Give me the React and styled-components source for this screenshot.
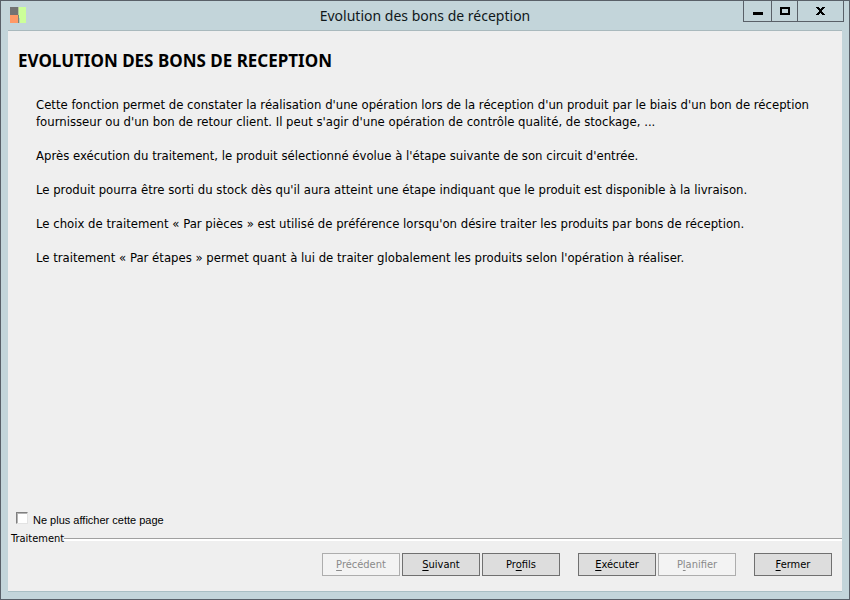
import React, { useState } from 'react';
import styled, { createGlobalStyle } from 'styled-components';

const GlobalStyle = createGlobalStyle`
  * {
    box-sizing: border-box;
  }

  body {
    margin: 0;
    background: #c3d5da;
    color: #000;
    font-family: 'DejaVu Sans Condensed', 'Noto Sans', sans-serif;
    font-size: 13px;
  }
`;

const Window = styled.div`
  display: flex;
  flex-direction: column;
  min-height: 100vh;
  padding: 0 7px 7px;
  border: 1px solid #596068;
  background: #c3d5da;
`;

const TitleBar = styled.header`
  display: grid;
  grid-template-columns: 102px 1fr 102px;
  height: 29px;
`;

const AppIcon = styled.svg`
  display: block;
  margin: 6px 2px;
`;

const WindowTitle = styled.div`
  text-align: center;
  color: #10181a;
  font-family: 'Noto Sans', 'Open Sans', sans-serif;
  font-size: 14px;
  line-height: 29px;
`;

const WindowControls = styled.div`
  display: flex;
  justify-content: flex-end;
  height: 21px;
  margin-right: -2px;
`;

const ControlButton = styled.button`
  display: flex;
  align-items: center;
  justify-content: center;
  flex: none;
  width: ${({ $width }) => $width}px;
  margin: 0 0 0 -1px;
  padding: 0;
  border: 1px solid #596068;
  border-top: 0;
  background: transparent;
`;

const Client = styled.main`
  display: flex;
  flex: 1;
  flex-direction: column;
  border-top: 1px solid #a9b9bd;
  border-bottom: 1px solid #a9bfc4;
  background: #efefef;
`;

const Heading = styled.h1`
  margin: 0;
  padding: 18px 10px 0;
  font-family: 'Noto Sans', 'Open Sans', sans-serif;
  font-size: 17px;
  font-weight: 700;
  line-height: 24px;
`;

const Description = styled.div`
  flex: 1;
  padding: 23px 28px 0;
`;

const Paragraph = styled.p`
  margin: 0 0 17px;
  line-height: 17px;
`;

const CheckLabel = styled.label`
  display: flex;
  align-items: flex-start;
  gap: 5px;
  height: 19px;
  padding-left: 8px;
  font-family: 'Liberation Sans', Arial, sans-serif;
  font-size: 11px;
  line-height: 16px;
`;

const Checkbox = styled.input`
  appearance: none;
  width: 12px;
  height: 12px;
  margin: 0;
  border: 1px solid;
  border-color: #808080 #e3e3e3 #e3e3e3 #808080;
  background: ${({ checked }) => (checked ? '#404040' : '#fff')};
  box-shadow: inset 1px 1px #b4b4b4;
`;

const GroupTitle = styled.h2`
  display: flex;
  align-items: center;
  margin: 0;
  padding-left: 3px;
  font-size: 11px;
  font-weight: 400;
  line-height: 16px;

  &::after {
    content: '';
    flex: 1;
    height: 2px;
    border-top: 1px solid #a0a0a0;
    background: #fff;
  }
`;

const Actions = styled.div`
  display: flex;
  justify-content: flex-end;
  gap: 18px;
  padding: 6px 10px 15px;
`;

const ButtonGroup = styled.div`
  display: flex;
  gap: 2px;
`;

const Button = styled.button`
  width: 78px;
  height: 23px;
  padding: 0;
  border: 1px solid #707070;
  background: #dddddd;
  color: #000;
  font-family: inherit;
  font-size: 11px;
  line-height: 21px;

  &:disabled {
    border-color: #adadad;
    background: #f3f3f3;
    color: #8a8a8a;
  }
`;

const AccessKey = styled.span`
  text-decoration: underline;
  text-underline-offset: 2px;
`;

const paragraphs = [
    "Cette fonction permet de constater la réalisation d'une opération lors de la réception d'un produit par le biais d'un bon de réception fournisseur ou d'un bon de retour client. Il peut s'agir d'une opération de contrôle qualité, de stockage, ...",
    "Après exécution du traitement, le produit sélectionné évolue à l'étape suivante de son circuit d'entrée.",
    "Le produit pourra être sorti du stock dès qu'il aura atteint une étape indiquant que le produit est disponible à la livraison.",
    "Le choix de traitement « Par pièces » est utilisé de préférence lorsqu'on désire traiter les produits par bons de réception.",
    "Le traitement « Par étapes » permet quant à lui de traiter globalement les produits selon l'opération à réaliser.",
];

// keyIndex: position of the underlined access key
const buttonGroups = [
    [
        { label: 'Précédent', keyIndex: 0, disabled: true },
        { label: 'Suivant', keyIndex: 0 },
        { label: 'Profils', keyIndex: 2 },
    ],
    [
        { label: 'Exécuter', keyIndex: 0 },
        { label: 'Planifier', keyIndex: 1, disabled: true },
    ],
    [{ label: 'Fermer', keyIndex: 0 }],
];

const ActionButton = ({ label, keyIndex, disabled }) => (
    <Button type="button" disabled={disabled} accessKey={label[keyIndex]}>
        {label.slice(0, keyIndex)}
        <AccessKey>{label[keyIndex]}</AccessKey>
        {label.slice(keyIndex + 1)}
    </Button>
);

const App = () => {
    const [hidePage, setHidePage] = useState(false);

    return (
        <>
            <GlobalStyle />
            <Window>
                <TitleBar>
                    <AppIcon width="16" height="16" viewBox="0 0 16 16" shapeRendering="crispEdges">
                        <rect width="8" height="8" fill="#737373" />
                        <rect y="8" width="8" height="8" fill="#ff9966" />
                        <rect x="8" width="1" height="8" fill="#b4c99a" />
                        <rect x="8" y="8" width="1" height="8" fill="#7c8474" />
                        <rect x="9" width="7" height="16" fill="#ccff99" />
                        <rect x="9" y="11" width="1" height="5" fill="#b9cdb9" />
                    </AppIcon>
                    <WindowTitle>Evolution des bons de réception</WindowTitle>
                    <WindowControls>
                        <ControlButton type="button" aria-label="Réduire" $width={29}>
                            <svg width="10" height="10" viewBox="0 0 10 10" shapeRendering="crispEdges">
                                <rect y="6" width="10" height="3" />
                            </svg>
                        </ControlButton>
                        <ControlButton type="button" aria-label="Agrandir" $width={27}>
                            <svg width="10" height="8" viewBox="0 0 10 8" shapeRendering="crispEdges">
                                <path d="M0 0h10v8H0zM2 2v4h6V2z" fillRule="evenodd" />
                            </svg>
                        </ControlButton>
                        <ControlButton type="button" aria-label="Fermer la fenêtre" $width={47}>
                            <svg width="9" height="8" viewBox="0 0 9 8" shapeRendering="crispEdges">
                                <path d="M0 0h3v1h1v1h1V1h1V0h3v1H8v1H7v1H6v2h1v1h1v1h1v1H6V7H5V6H4v1H3v1H0V7h1V6h1V5h1V3H2V2H1V1H0z" />
                            </svg>
                        </ControlButton>
                    </WindowControls>
                </TitleBar>
                <Client>
                    <Heading>EVOLUTION DES BONS DE RECEPTION</Heading>
                    <Description>
                        {paragraphs.map((text) => (
                            <Paragraph key={text}>{text}</Paragraph>
                        ))}
                    </Description>
                    <CheckLabel>
                        <Checkbox
                            type="checkbox"
                            checked={hidePage}
                            onChange={(e) => setHidePage(e.target.checked)}
                        />
                        Ne plus afficher cette page
                    </CheckLabel>
                    <GroupTitle>Traitement</GroupTitle>
                    <Actions>
                        {buttonGroups.map((group) => (
                            <ButtonGroup key={group[0].label}>
                                {group.map((button) => (
                                    <ActionButton key={button.label} {...button} />
                                ))}
                            </ButtonGroup>
                        ))}
                    </Actions>
                </Client>
            </Window>
        </>
    );
};

export default App;
